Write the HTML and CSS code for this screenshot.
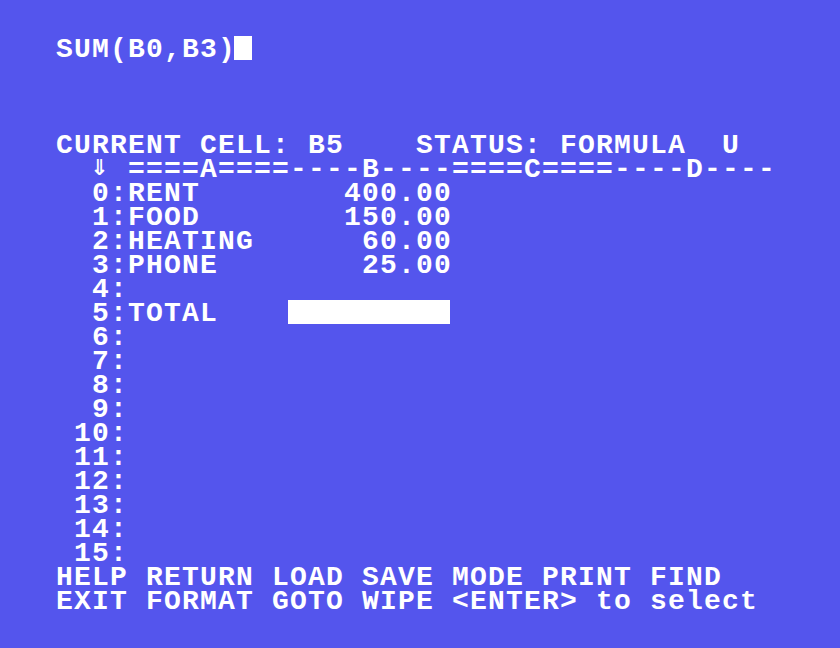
FILE: index.html
```html
<!DOCTYPE html>
<html>
<head>
<meta charset="utf-8">
<link rel="stylesheet" href="styles.css">
</head>
<body>
<div class="screen">
<div class="ln">SUM(B0,B3)<span class="cursor"></span></div>
<div class="ln"></div>
<div class="ln"></div>
<div class="ln"></div>
<div class="ln">CURRENT CELL: B5    STATUS: FORMULA  U</div>
<div class="ln">  <span class="arw">⇓</span> ====A====----B----====C====----D----</div>
<div class="ln">  0:RENT        400.00</div>
<div class="ln">  1:FOOD        150.00</div>
<div class="ln">  2:HEATING      60.00</div>
<div class="ln">  3:PHONE        25.00</div>
<div class="ln">  4:</div>
<div class="ln">  5:TOTAL    <span class="bar"></span></div>
<div class="ln">  6:</div>
<div class="ln">  7:</div>
<div class="ln">  8:</div>
<div class="ln">  9:</div>
<div class="ln"> 10:</div>
<div class="ln"> 11:</div>
<div class="ln"> 12:</div>
<div class="ln"> 13:</div>
<div class="ln"> 14:</div>
<div class="ln"> 15:</div>
<div class="ln">HELP RETURN LOAD SAVE MODE PRINT FIND</div>
<div class="ln">EXIT FORMAT GOTO WIPE &lt;ENTER&gt; to select</div>
</div>
</body>
</html>
```
FILE: styles.css
```css
html, body {
  margin: 0;
  padding: 0;
  background: #5455ed;
}
.screen {
  width: 840px;
  height: 648px;
  box-sizing: border-box;
  padding: 36px 0 0 56px;
  background: #5455ed;
  color: #ffffff;
  font-family: "Liberation Mono", "DejaVu Sans Mono", monospace;
  font-weight: bold;
  font-size: 28px;
  letter-spacing: 1.2px;
  overflow: hidden;
}
.ln {
  box-sizing: border-box;
  height: 24px;
  padding-top: 2px;
  line-height: 24px;
  white-space: pre;
}
.cursor,
.bar {
  display: inline-block;
  vertical-align: top;
  margin-top: -2px;
  margin-left: -2px;
  height: 24px;
  background: #ffffff;
}
.cursor {
  width: 18px;
}
.bar {
  width: 162px;
}
.arw {
  display: inline-block;
  width: 18px;
  margin-left: -2px;
  margin-right: 2px;
  letter-spacing: 0;
  font-family: "DejaVu Sans", sans-serif;
  font-weight: bold;
  font-size: 22px;
  text-align: left;
  vertical-align: top;
  height: 22px;
  line-height: 20px;
}
```
